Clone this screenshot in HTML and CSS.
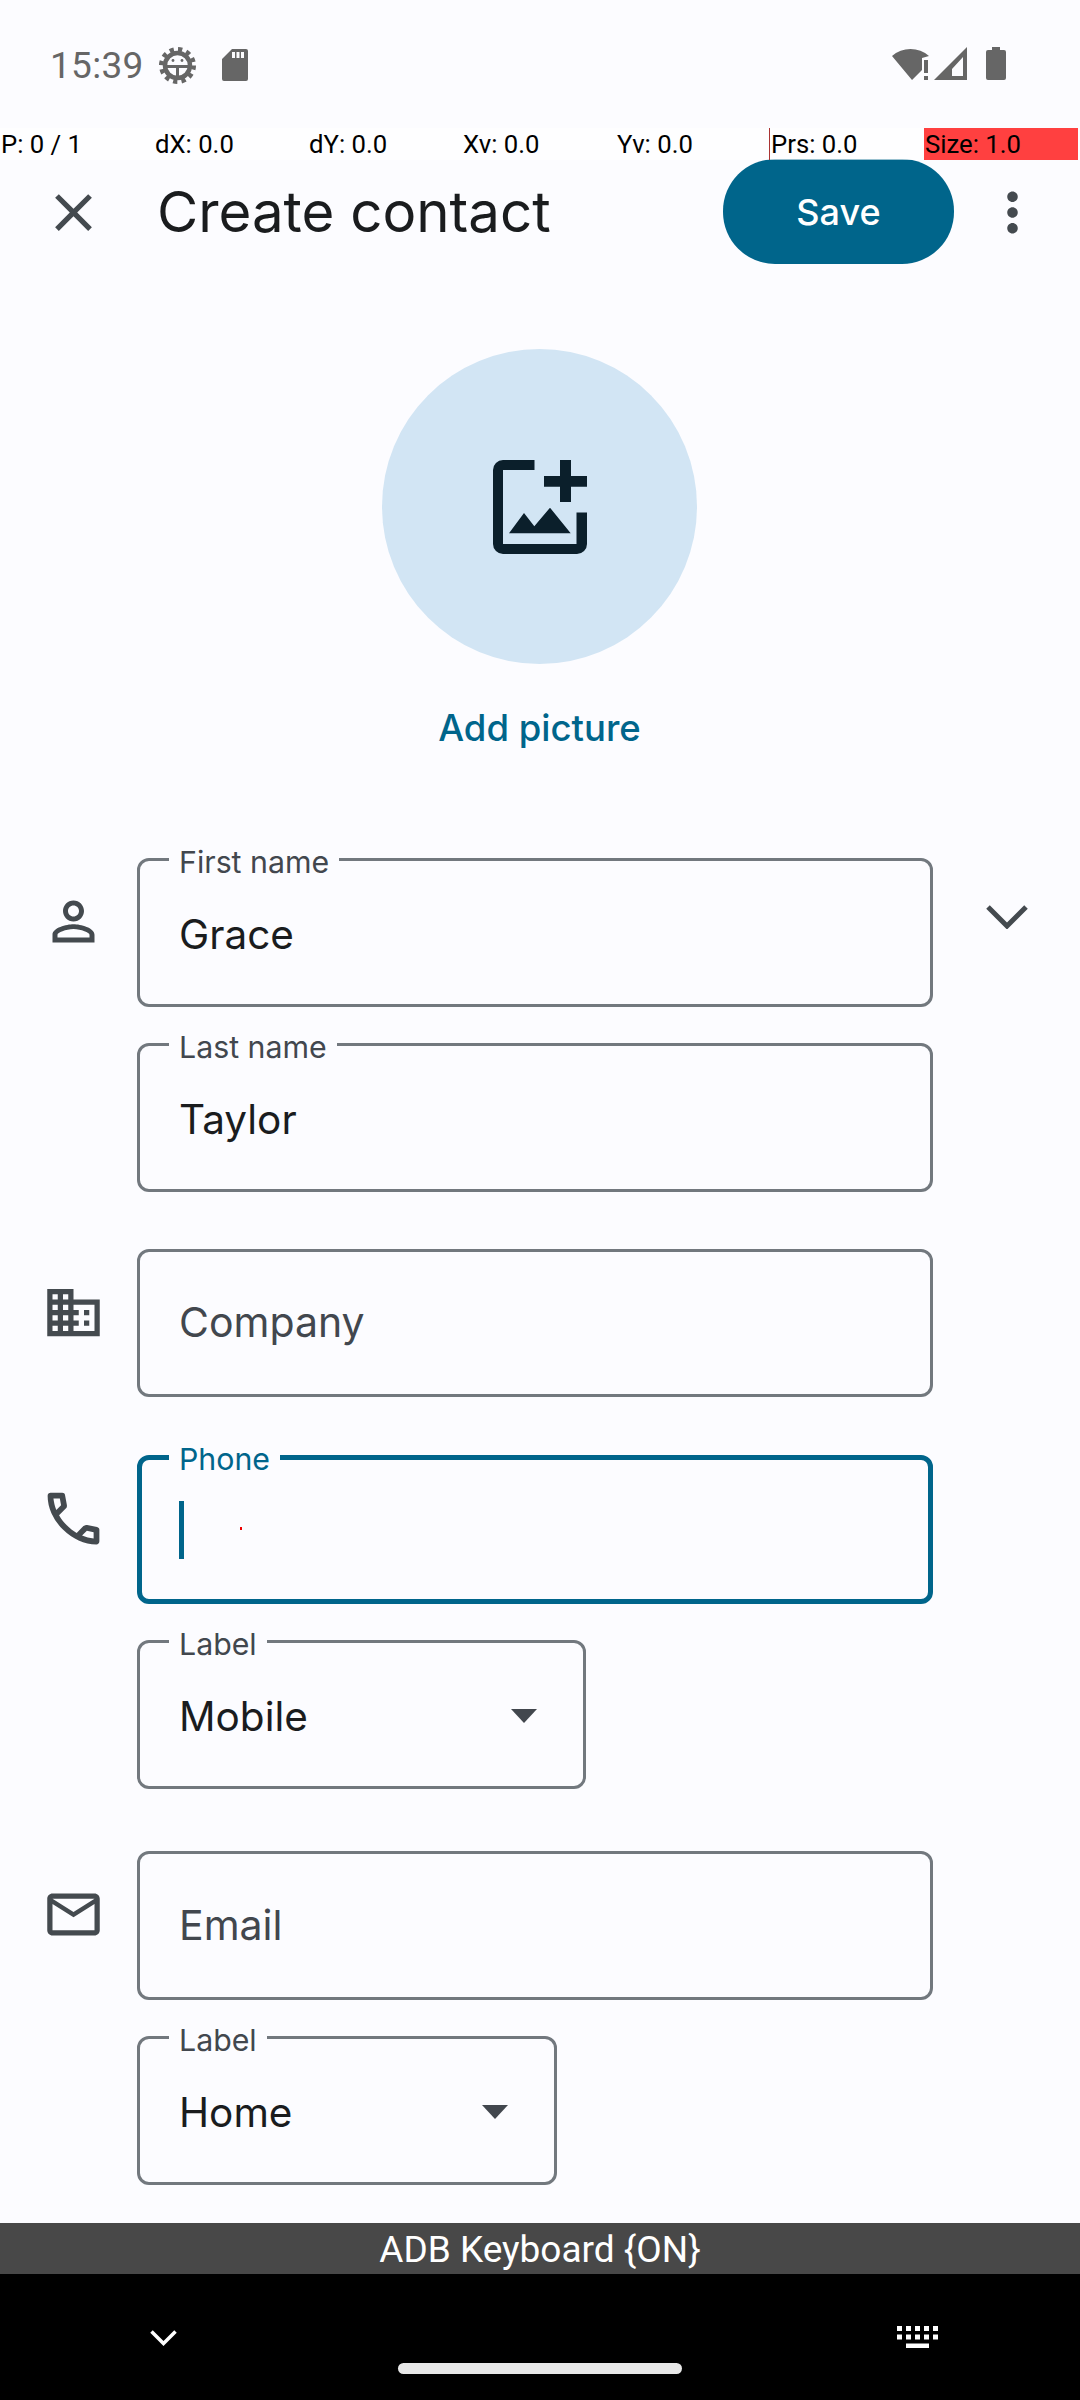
FILE: index.html
```html
<!DOCTYPE html>
<html lang="en">
<head>
<meta charset="utf-8">
<title>Create contact</title>
<link rel="stylesheet" href="styles.css">
</head>
<body>
<div class="screen">
  <header class="status">
    <div class="status-left">
      <span class="time">15:39</span>
      <svg class="st-gear" viewBox="0 0 37 37"><circle cx="18.500" cy="18.500" r="16.300" fill="none" stroke="#666" stroke-width="4.400" stroke-dasharray="4.270 4.270"/><circle cx="18.500" cy="18.500" r="12.500" fill="none" stroke="#666" stroke-width="4.500"/><path fill="#666" d="M6 18h25v3H20v10h-3V21H6z"/><circle cx="14" cy="13.500" r="1.400" fill="#666"/><circle cx="23" cy="13.500" r="1.400" fill="#666"/></svg>
      <svg class="st-sd" viewBox="0 0 26 32"><path fill="#666" fill-rule="evenodd" d="M10 0h14a2 2 0 0 1 2 2v28a2 2 0 0 1-2 2H2a2 2 0 0 1-2-2V10z M10 3v6h3V3z M14.500 3v6h3V3z M19 3v6h3V3z"/></svg>
    </div>
    <div class="status-right">
      <svg class="st-wifi" viewBox="0 0 37 33"><path fill="#666" d="M0 9A28 28 0 0 1 37 9L30 11V23L20 33z"/><path fill="#666" d="M32 13h4v13h-4zM32 29h4v4h-4z"/></svg>
      <svg class="st-signal" viewBox="0 0 33 33"><path fill="#666" fill-rule="evenodd" d="M33 0v33H0z M29 10L18 22v7h11z"/></svg>
      <svg class="st-batt" viewBox="0 0 20 33"><path fill="#666" d="M6 0h8v3h4a2 2 0 0 1 2 2v26a2 2 0 0 1-2 2H2a2 2 0 0 1-2-2V5a2 2 0 0 1 2-2h4z"/></svg>
    </div>
  </header>

  <div class="pointer">
    <span class="pcell">P: 0 / 1</span>
    <span class="pcell">dX: 0.0</span>
    <span class="pcell">dY: 0.0</span>
    <span class="pcell">Xv: 0.0</span>
    <span class="pcell">Yv: 0.0</span>
    <span class="pcell prs">Prs: 0.0</span>
    <span class="pcell size">Size: 1.0</span>
  </div>

  <div class="toolbar">
    <svg class="tb-close" viewBox="0 0 24 24"><path fill="#444a4f" d="M19 6.410L17.590 5 12 10.590 6.410 5 5 6.410 10.590 12 5 17.590 6.410 19 12 13.410 17.590 19 19 17.590 13.410 12z"/></svg>
    <h1 class="title">Create contact</h1>
    <div class="save">Save</div>
    <svg class="tb-more" viewBox="0 0 24 24"><path fill="#444a4f" d="M12 8c1.100 0 2-.9 2-2s-.9-2-2-2-2 .9-2 2 .9 2 2 2zm0 2c-1.100 0-2 .9-2 2s.9 2 2 2 2-.9 2-2-.9-2-2-2zm0 6c-1.100 0-2 .9-2 2s.9 2 2 2 2-.9 2-2-.9-2-2-2z"/></svg>
  </div>

  <section class="photo">
    <div class="avatar">
      <svg class="avatar-icon" viewBox="0 0 94 94"><path fill="#0b1f2b" d="M41.500 0H10A10 10 0 0 0 0 10V84A10 10 0 0 0 10 94H84A10 10 0 0 0 94 84V52.500H83.500V84H10V10H41.500z"/><path fill="#0b1f2b" d="M67 0H78V16H94V26.700H78V42H67V26.700H51V16H67z"/><path fill="#0b1f2b" d="M16 73.300L31 53 41.300 66.300 57 47.700 77.700 73.300z"/></svg>
    </div>
    <div class="add-picture">Add picture</div>
  </section>

  <main class="form">
    <div class="row row-name">
      <div class="lead lead-name">
        <svg class="ic" viewBox="0 0 24 24"><path fill="#444a4f" d="M12 5.900c1.160 0 2.100.94 2.100 2.100s-.94 2.100-2.100 2.100S9.900 9.160 9.900 8s.94-2.100 2.100-2.100m0 9c2.970 0 6.100 1.460 6.100 2.100v1.100H5.900V17c0-.64 3.130-2.100 6.100-2.100M12 4C9.790 4 8 5.790 8 8s1.790 4 4 4 4-1.790 4-4-1.790-4-4-4zm0 9c-2.670 0-8 1.340-8 4v3h16v-3c0-2.660-5.330-4-8-4z"/></svg>
      </div>
      <div class="fields">
        <div class="field"><span class="flabel">First name</span><span class="value">Grace</span></div>
        <div class="field"><span class="flabel">Last name</span><span class="value">Taylor</span></div>
      </div>
      <svg class="expand" viewBox="0 0 42 25"><path fill="none" stroke="#444a4f" stroke-width="5" d="M2 3L21 22 40 3"/></svg>
    </div>

    <div class="row row-company">
      <div class="lead lead-company">
        <svg class="ic" viewBox="0 0 24 24"><path fill="#444a4f" d="M12 7V3H2v18h20V7H12zM6 19H4v-2h2v2zm0-4H4v-2h2v2zm0-4H4V9h2v2zm0-4H4V5h2v2zm4 12H8v-2h2v2zm0-4H8v-2h2v2zm0-4H8V9h2v2zm0-4H8V5h2v2zm10 12h-8v-2h2v-2h-2v-2h2v-2h-2V9h8v10zm-2-8h-2v2h2v-2zm0 4h-2v2h2v-2z"/></svg>
      </div>
      <div class="fields">
        <div class="field"><span class="hint">Company</span></div>
      </div>
    </div>

    <div class="row row-phone">
      <div class="lead lead-phone">
        <svg class="ic-phone" viewBox="0 -960 960 960"><path fill="#444a4f" d="M798-120q-125 0-247-54.500T329-329Q229-429 174.500-551T120-798q0-18 12-30t30-12h162q14 0 25 9.500t13 22.500l26 140q2 16-1 27t-11 19l-97 98q20 37 47.500 71.500T387-386q31 31 65 57.500t72 48.500l94-94q9-9 23.500-13.500T670-390l138 28q14 4 23 14.500t9 23.500v162q0 18-12 30t-30 12ZM241-600l66-66-17-94h-89q5 41 14 81t26 79Zm358 358q39 17 79.500 27t81.500 13v-88l-94-19-67 67Z"/></svg>
      </div>
      <div class="fields">
        <div class="field focused"><span class="flabel">Phone</span><span class="caret"></span><span class="dot"></span></div>
        <div class="field select mobile"><span class="flabel">Label</span><span class="value">Mobile</span><span class="arrow"></span></div>
      </div>
    </div>

    <div class="row row-email">
      <div class="lead lead-email">
        <svg class="ic" viewBox="0 0 24 24"><path fill="#444a4f" d="M22 6c0-1.100-.9-2-2-2H4c-1.100 0-2 .9-2 2v12c0 1.100.9 2 2 2h16c1.100 0 2-.9 2-2V6zm-2 0l-8 5-8-5h16zm0 12H4V8l8 5 8-5v10z"/></svg>
      </div>
      <div class="fields">
        <div class="field"><span class="hint">Email</span></div>
        <div class="field select home"><span class="flabel">Label</span><span class="value">Home</span><span class="arrow"></span></div>
      </div>
    </div>
  </main>

  <div class="adb">ADB Keyboard {ON}</div>

  <nav class="navbar">
    <svg class="nav-back" viewBox="0 0 27 16"><path fill="none" stroke="#fff" stroke-width="3.500" d="M1.500 1.500L13.500 13.500 25.500 1.500"/></svg>
    <svg class="nav-kb" viewBox="0 0 41 22"><path fill="#fff" d="M0 0h5v5H0zM9 0h5v5H9zM18 0h5v5h-5zM27 0h5v5h-5zM36 0h5v5h-5zM0 8.500h5v5H0zM9 8.500h5v5H9zM18 8.500h5v5h-5zM27 8.500h5v5h-5zM36 8.500h5v5h-5zM9 17.500h23V22H9z"/></svg>
    <div class="handle"></div>
  </nav>
</div>
</body>
</html>
```

FILE: styles.css
```css
* { box-sizing: border-box; }
html, body { margin: 0; padding: 0; }
body { width: 1080px; height: 2400px; overflow: hidden; background: #fcfcff; font-family: Inter, Roboto, sans-serif; }
.screen { width: 1080px; height: 2400px; display: flex; flex-direction: column; position: relative; overflow: hidden; }

.status { height: 128px; flex: none; display: flex; justify-content: space-between; align-items: flex-start; padding: 0 74px 0 50px; }
.status-left { display: flex; align-items: flex-start; }
.time { font-family: Roboto, sans-serif; font-size: 37px; line-height: 44px; margin-top: 44px; color: #666; letter-spacing: .3px; width: 109px; white-space: nowrap; }
.st-gear { width: 37px; height: 37px; margin-top: 47px; }
.st-sd { width: 26px; height: 32px; margin: 49px 0 0 26px; }
.status-right { display: flex; align-items: flex-start; padding-top: 47px; }
.st-wifi { width: 37px; height: 33px; }
.st-signal { width: 33px; height: 33px; margin-left: 5px; }
.st-batt { width: 20px; height: 33px; margin-left: 19px; }

.pointer { height: 32px; flex: none; display: grid; grid-template-columns: repeat(7, 154px); position: relative; z-index: 2; background: rgba(255,255,255,.6); }
.pcell { font-family: Roboto, sans-serif; font-size: 25.700px; line-height: 32px; color: #000; padding-left: 1px; white-space: nowrap; overflow: hidden; }
.prs { border-left: 1px solid #a33; padding-left: 1px; margin-left: -1px; }
.size { background: #ff4040; padding-left: 1px; }

.toolbar { height: 104px; flex: none; display: flex; align-items: center; }
.tb-close { width: 63px; height: 63px; margin-left: 42px; flex: none; }
.title { margin: 0 0 0 52px; flex: 1; font-size: 56.400px; line-height: 64px; font-weight: 400; color: #1a1c1e; white-space: nowrap; }
.save { width: 231px; height: 105px; margin-top: -2px; padding-top: 2px; border-radius: 52px; background: #00658b; color: #fff; font-size: 36px; font-weight: 500; display: flex; align-items: center; justify-content: center; }
.tb-more { width: 63px; height: 63px; margin: 0 36px 0 27px; flex: none; }

.photo { flex: none; display: flex; flex-direction: column; align-items: center; padding: 85px 1px 0 0; }
.avatar { width: 315px; height: 315px; border-radius: 50%; background: #d2e5f4; display: flex; align-items: center; justify-content: center; }
.avatar-icon { width: 94px; height: 94px; }
.add-picture { margin-top: 40px; font-size: 36.500px; line-height: 48px; font-weight: 500; color: #00658b; }

.form { flex: 1; display: flex; flex-direction: column; padding-top: 106px; min-height: 0; }
.row { display: flex; align-items: flex-start; position: relative; }
.row-company { margin-top: 58px; }
.row-company .field { height: 148px; margin-top: -1px; }
.row-phone { margin-top: 58px; }
.row-email { margin-top: 62px; }
.lead { width: 137px; flex: none; display: flex; padding-left: 41.5px; }
.lead-name { padding-top: 32px; }
.lead-company { padding-top: 31px; }
.lead-phone { padding-top: 28.5px; padding-left: 38.5px; }
.lead-email { padding-top: 32px; }
.ic { width: 63px; height: 63px; flex: none; }
.ic-phone { width: 69px; height: 69px; flex: none; }

.fields { width: 796px; flex: none; display: flex; flex-direction: column; gap: 36px; }
.field { position: relative; height: 149px; border: 3px solid #72787e; border-radius: 12px; display: flex; align-items: center; padding-left: 39px; }
.flabel { position: absolute; left: 29px; top: -14px; padding: 0 10px; line-height: 30px; font-size: 30.300px; color: #42474e; background: #fcfcff; white-space: nowrap; }
.value { font-size: 40.500px; color: #1a1c1e; line-height: 56px; padding-top: 4px; }
.hint { font-size: 41px; line-height: 56px; color: #42474e; margin-top: -2px; }
.focused { border: 5px solid #00658b; padding-left: 37px; }
.focused .flabel { color: #00658b; left: 27px; top: -16px; }
.caret { width: 5px; height: 58px; background: #00658b; }
.dot { position: absolute; left: 98px; top: 67px; width: 2px; height: 3px; background: #e00; }
.select { justify-content: space-between; }
.mobile { width: 449px; }
.home { width: 420px; }
.arrow { width: 0; height: 0; border-left: 13.5px solid transparent; border-right: 13.5px solid transparent; border-top: 14px solid #42474e; margin: 3px 46px 0 0; }
.expand { position: absolute; left: 986px; top: 46px; width: 42px; height: 25px; }

.adb { height: 51px; flex: none; background: #484848; color: #fff; font-family: Roboto, sans-serif; font-size: 37px; line-height: 53px; text-align: center; white-space: nowrap; }
.navbar { height: 126px; flex: none; background: #000; position: relative; }
.nav-back { position: absolute; left: 150px; top: 56px; width: 27px; height: 16px; }
.nav-kb { position: absolute; left: 897px; top: 52px; width: 41px; height: 22px; }
.handle { position: absolute; left: 398px; top: 89px; width: 284px; height: 11px; border-radius: 6px; background: #e8e8e8; }
```
